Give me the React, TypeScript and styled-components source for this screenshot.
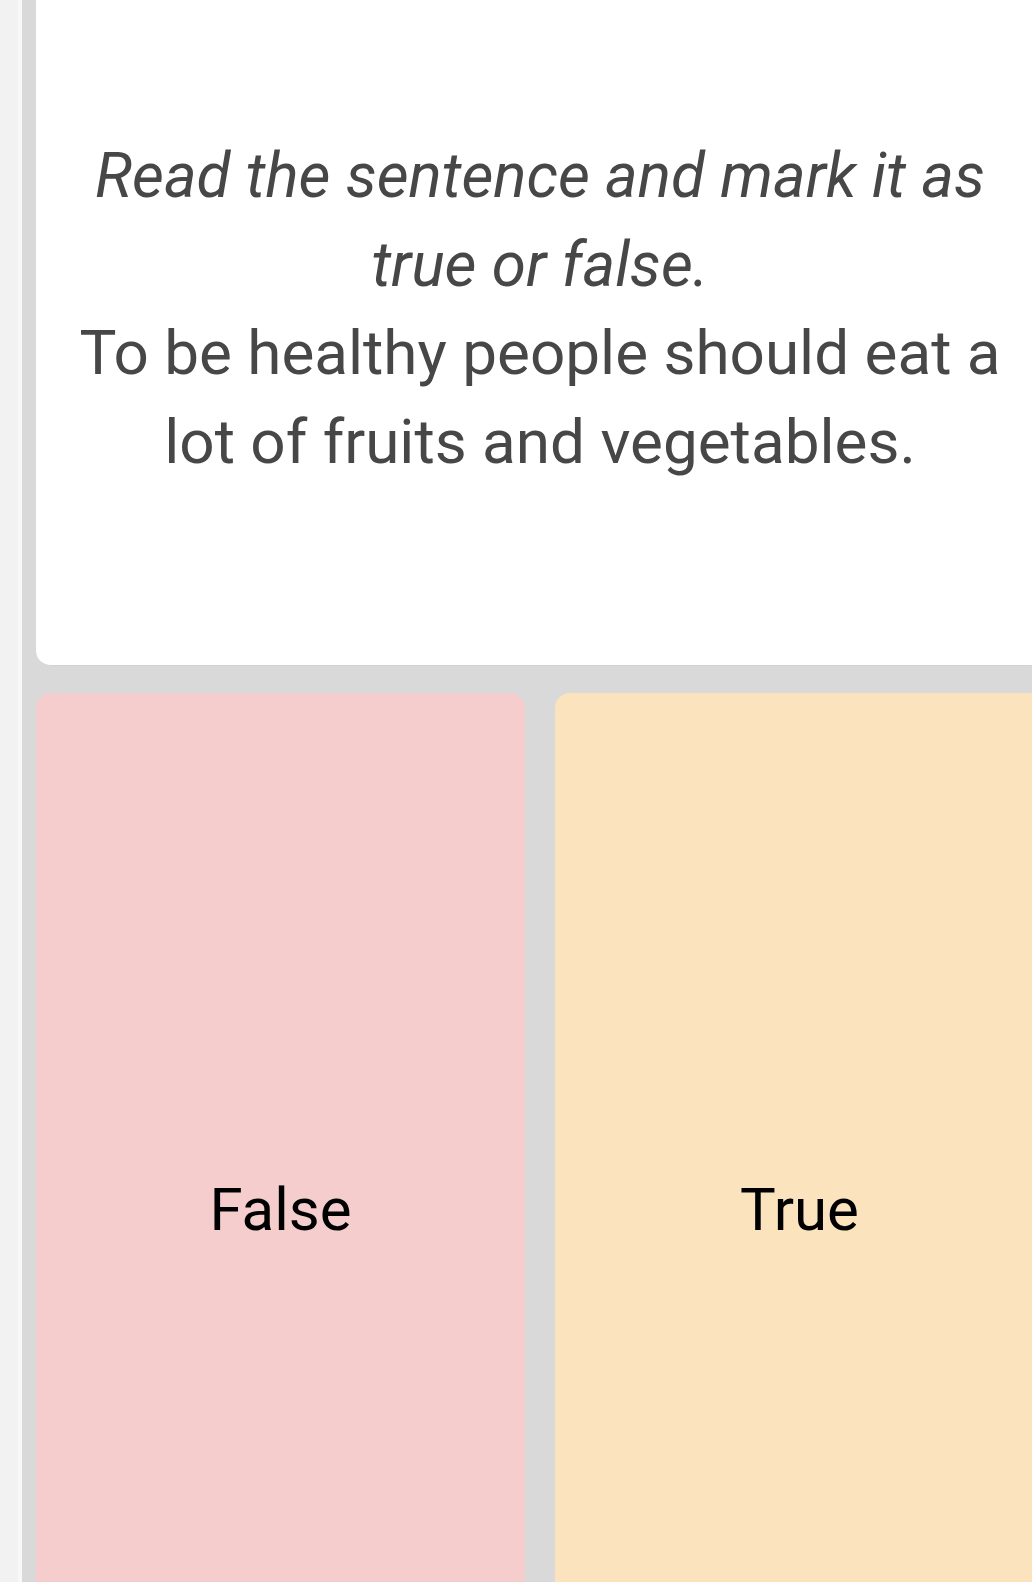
import React from "react";
import styled, { createGlobalStyle } from "styled-components";

const GlobalStyle = createGlobalStyle`
  html, body {
    margin: 0;
    padding: 0;
    background: #f2f2f2;
    overflow: hidden;
  }
  body {
    font-family: Roboto, "Noto Sans", Arial, sans-serif;
  }
`;

type Choice = {
  label: string;
  tone: string;
};

const choices: Choice[] = [
  { label: "False", tone: "#f6cdcd" },
  { label: "True", tone: "#fbe3bd" },
];

const App: React.FC = () => (
  <>
    <GlobalStyle />
    <Screen>
      <Edge />
      <Board>
        <QuestionCard>
          <Instruction>Read the sentence and mark it as true or false.</Instruction>
          <Statement>To be healthy people should eat a lot of fruits and vegetables.</Statement>
        </QuestionCard>
        <Answers>
          {choices.map((c) => (
            <AnswerButton key={c.label} tone={c.tone}>
              {c.label}
            </AnswerButton>
          ))}
        </Answers>
      </Board>
    </Screen>
  </>
);

const Screen = styled.div`
  display: flex;
  width: 1032px;
  height: 1582px;
  overflow: hidden;
  background: #f2f2f2;
`;

const Edge = styled.div`
  flex: 0 0 18px;
  border-right: 4px solid #f8f8f8;
`;

const Board = styled.div`
  flex: 0 0 1036px;
  background: #d9d9d9;
  padding: 0 14px;
  box-sizing: border-box;
  display: flex;
  flex-direction: column;
  gap: 27px;
`;

const QuestionCard = styled.div`
  margin-top: -40px;
  background: #ffffff;
  border-radius: 15px;
  padding: 172px 20px 179px;
  text-align: center;
  color: #474747;
  font-size: 62px;
  line-height: 88.5px;
  border-bottom: 1px solid #d2d2d2;
`;

const Instruction = styled.p`
  margin: 0;
  font-style: italic;
`;

const Statement = styled.p`
  margin: 0;
`;

const Answers = styled.div`
  display: grid;
  grid-template-columns: 1fr 1fr;
  gap: 30px;
`;

const AnswerButton = styled.div<{ tone: string }>`
  height: 1032px;
  border-radius: 15px;
  background: ${(p) => p.tone};
  display: flex;
  align-items: center;
  justify-content: center;
  font-size: 60px;
  color: #000000;
`;

export default App;
